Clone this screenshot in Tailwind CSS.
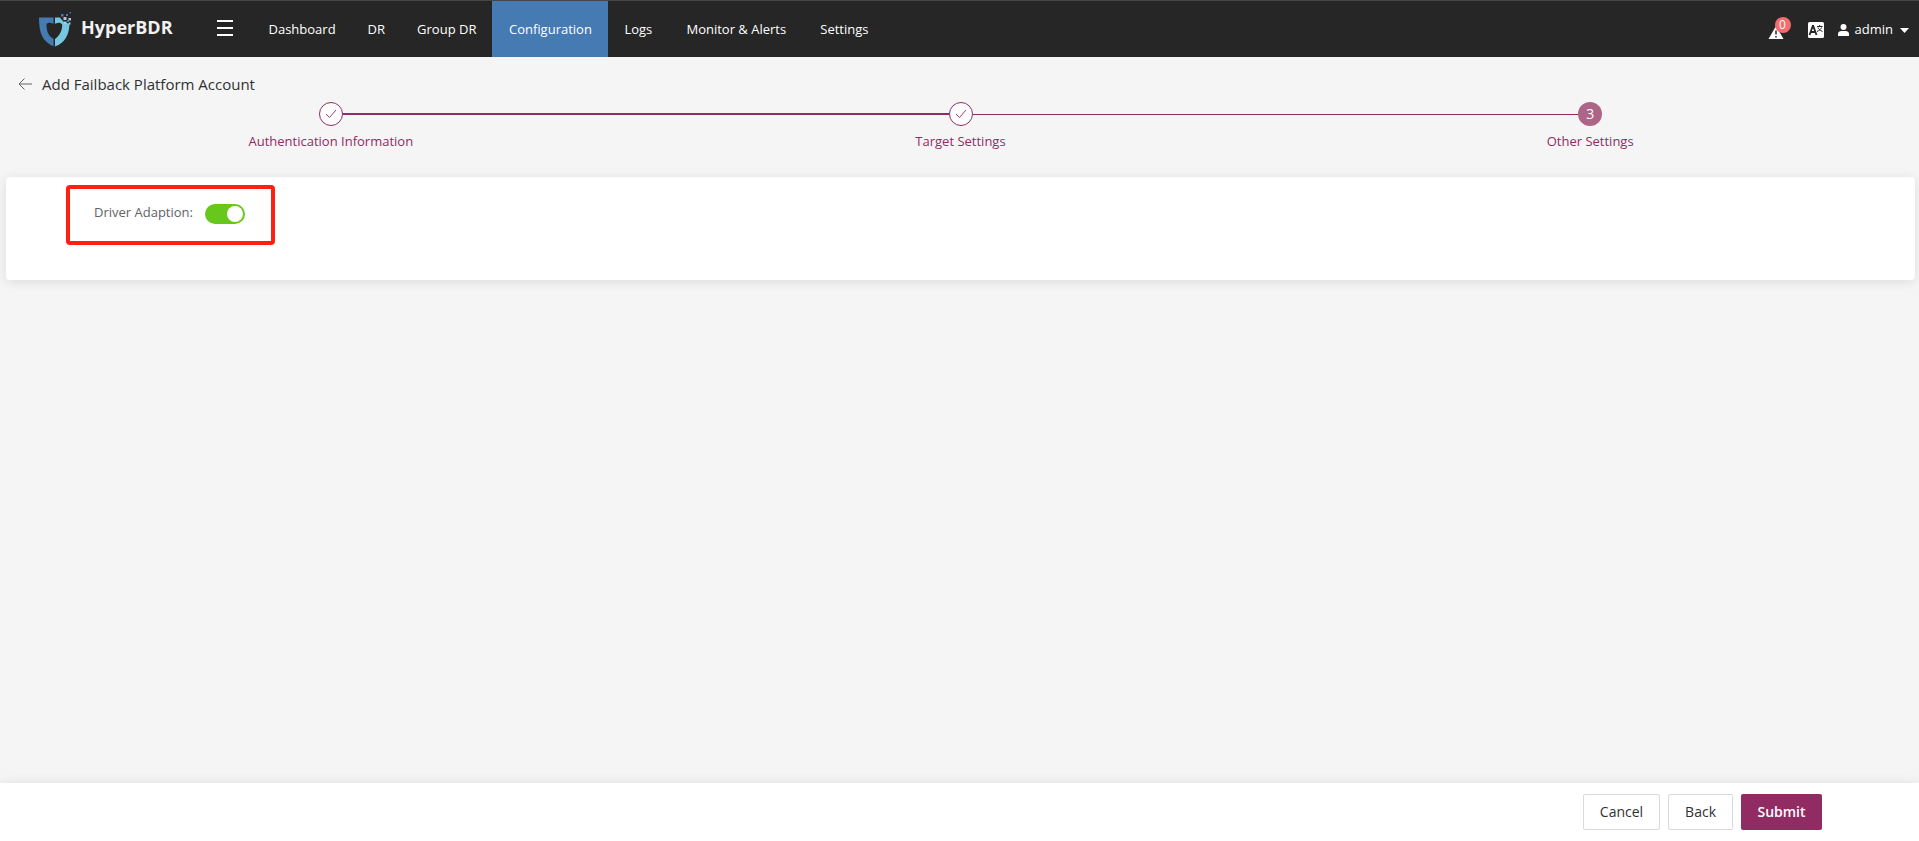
<!DOCTYPE html>
<html lang="en">
<head>
<meta charset="utf-8">
<meta name="viewport" content="width=device-width, initial-scale=1">
<title>HyperBDR - Add Failback Platform Account</title>
<script src="https://cdn.jsdelivr.net/npm/@tailwindcss/browser@4"></script>
</head>
<body class="flex min-h-screen flex-col bg-[#f5f5f5] font-['Open_Sans','Noto_Sans',sans-serif] text-[13px] text-[#303133]">
  <header class="flex h-[57px] items-stretch border-t border-[#444746] bg-[#262626] pr-[10px] pl-[39px] text-white">
    <a href="#" class="flex items-center gap-[10px]">
      <svg class="h-9 w-8" viewBox="0 0 32 36" aria-hidden="true">
        <path fill="#457ab2" d="M0 6.500h14.500v6.200l-3.500-1c-1.200 0-3 .3-3.500 1.300 0 6.500 1 11 7 15v7.500C3 30 0 22 0 6.500z"/>
        <path fill="#76c7e0" d="M16 6.500h5l1.500 2 2.500 2.500 5.500 2C30 24 26 32 16 35.500V28c5.500-4 7.200-9 7.200-14.500-1-1.500-2.500-2-4-1.800L16 12.700z"/>
        <g fill="#457ab2"><path d="M22 3h2.500v2.500H22zM27 3h2v2h-2zM30.500 1H32v1.500h-1.500zM28 9h2v2h-2z"/></g>
        <g fill="#a5cadb"><path d="M24.500 6h3v3h-3zM29.500 7h2.500v2.500h-2.500zM25 10.500h2.500v2.500H25zM29.500 11.500h2v2h-2z"/></g>
      </svg>
      <span class="pb-1 text-[18px] font-bold text-[#f2f2f2]">HyperBDR</span>
    </a>
    <div class="flex w-20 items-center justify-end pr-3 pb-[2px]">
      <button type="button" class="flex w-8 justify-center" aria-label="Toggle menu">
        <svg class="h-4 w-4" viewBox="0 0 16 16" stroke="#fff" stroke-width="2" aria-hidden="true"><path d="M0 1h16M0 8h16M0 15h16"/></svg>
      </button>
    </div>
    <nav class="flex items-stretch">
      <a href="#" class="flex items-center px-4 pt-[2px]">Dashboard</a>
      <a href="#" class="flex items-center px-4 pt-[2px]">DR</a>
      <a href="#" class="flex items-center px-4 pt-[2px]">Group DR</a>
      <a href="#" aria-current="page" class="flex min-w-[116px] items-center justify-center bg-[#457ab2] px-4 pt-[2px]">Configuration</a>
      <a href="#" class="flex items-center px-4 pt-[2px]">Logs</a>
      <a href="#" class="flex min-w-[136px] items-center justify-center px-4 pt-[2px]">Monitor &amp; Alerts</a>
      <a href="#" class="flex items-center px-4 pt-[2px]">Settings</a>
    </nav>
    <div class="ml-auto flex items-center pt-[2px]">
      <button type="button" class="relative mr-6" aria-label="Alerts">
        <svg class="mt-1 h-4 w-4" viewBox="0 0 16 16" aria-hidden="true"><path fill="#fff" d="M8 2 15.500 15H.5z"/><path stroke="#262626" stroke-width="1.500" d="M8 6.500v4M8 12v1.500"/></svg>
        <span class="absolute -top-[3px] left-[7px] h-4 w-4 rounded-full bg-[#f56c6c] text-center text-[12px] leading-4">0</span>
      </button>
      <button type="button" class="mr-[14px]" aria-label="Language">
        <svg class="h-4 w-4" viewBox="0 0 16 16" aria-hidden="true"><rect width="16" height="16" rx="1.500" fill="#fff"/><path fill="none" stroke="#262626" stroke-width="1.800" d="m1.500 13 3.300-9h.4l3.300 9M2.700 10h4.600"/><path fill="none" stroke="#262626" d="M9 4.500h5.500M11.700 3v1.500M10 5.500c.5 1.500 2 3 4.500 4M13.500 5.500c-.5 1.500-2 3-4.500 4"/></svg>
      </button>
      <button type="button" class="flex items-center">
        <svg class="mr-[6px] h-3 w-[11px]" viewBox="0 0 11 12" fill="#fff" aria-hidden="true"><circle cx="5.500" cy="3" r="3"/><path d="M0 12v-2c0-2 1.500-3 3.500-3h4c2 0 3.500 1 3.500 3v2z"/></svg>
        admin
        <svg class="ml-[7px] h-[5px] w-[9px]" viewBox="0 0 9 5" fill="#fff" aria-hidden="true"><path d="M0 0h9L4.500 5z"/></svg>
      </button>
    </div>
  </header>

  <main class="flex-1">
    <div class="flex h-[45px] items-end pl-[18px]">
      <h1 class="flex items-center gap-[10px] text-[15px] leading-9">
        <a href="#" aria-label="Back to list"><svg class="h-3 w-[14px]" viewBox="0 0 14 12" fill="none" stroke="#606266" aria-hidden="true"><path d="M14 6H1M6.500.500 1 6l5.500 5.500"/></svg></a>
        Add Failback Platform Account
      </h1>
    </div>
    <ol class="grid grid-cols-3 pr-[14px] pl-4 text-[#912b63]">
      <li class="flex flex-col items-center">
        <div class="flex w-full items-center">
          <span class="flex-1"></span>
          <span class="flex h-6 w-6 items-center justify-center rounded-full border border-[#912b63] bg-white"><svg class="h-3 w-3" viewBox="0 0 12 12" fill="none" stroke="#912b63" stroke-width="0.900" aria-hidden="true"><path d="m1 6 3.500 3.500L11 2"/></svg></span>
          <span class="h-[2px] flex-1 bg-[#912b63]"></span>
        </div>
        <span class="leading-[30px]">Authentication Information</span>
      </li>
      <li class="flex flex-col items-center">
        <div class="flex w-full items-center">
          <span class="h-[2px] flex-1 bg-[#912b63]"></span>
          <span class="flex h-6 w-6 items-center justify-center rounded-full border border-[#912b63] bg-white"><svg class="h-3 w-3" viewBox="0 0 12 12" fill="none" stroke="#912b63" stroke-width="0.900" aria-hidden="true"><path d="m1 6 3.500 3.500L11 2"/></svg></span>
          <span class="h-px flex-1 bg-[#912b63]"></span>
        </div>
        <span class="leading-[30px]">Target Settings</span>
      </li>
      <li aria-current="step" class="flex flex-col items-center">
        <div class="flex w-full items-center">
          <span class="h-px flex-1 bg-[#912b63]"></span>
          <span class="flex h-6 w-6 items-center justify-center rounded-full bg-[#ac6587] text-sm text-white">3</span>
          <span class="flex-1"></span>
        </div>
        <span class="leading-[30px]">Other Settings</span>
      </li>
    </ol>
    <form id="settings" class="relative mt-[21px] mr-1 ml-[6px] h-[103px] rounded-sm bg-white pt-[23px] pl-[88px] shadow-[0_2px_12px_rgba(0,0,0,0.1)]">
      <div class="flex items-center gap-3">
        <label for="driver-adaption" class="leading-6 text-[#606266]">Driver Adaption:</label>
        <input id="driver-adaption" type="checkbox" role="switch" checked class="mt-[3px] h-5 w-10 appearance-none rounded-full bg-[#dcdfe6] before:mt-[2px] before:ml-[2px] before:block before:h-4 before:w-4 before:rounded-full before:bg-white checked:bg-[#67c81b] checked:before:ml-[22px]">
      </div>
      <div class="pointer-events-none absolute top-2 left-[60px] h-[60px] w-[209px] rounded-sm border-4 border-[#ff2010]"></div>
    </form>
  </main>

  <footer class="flex h-[58px] items-center justify-end gap-2 bg-white pr-[97px] text-sm shadow-[0_2px_12px_rgba(0,0,0,0.12)]">
    <button type="button" class="h-9 rounded-xs border border-[#d9d9d9] px-4">Cancel</button>
    <button type="button" class="h-9 rounded-xs border border-[#d9d9d9] px-4">Back</button>
    <button type="submit" form="settings" class="h-9 min-w-[81px] rounded-xs bg-[#912b63] px-4 font-semibold text-white">Submit</button>
  </footer>
</body>
</html>
